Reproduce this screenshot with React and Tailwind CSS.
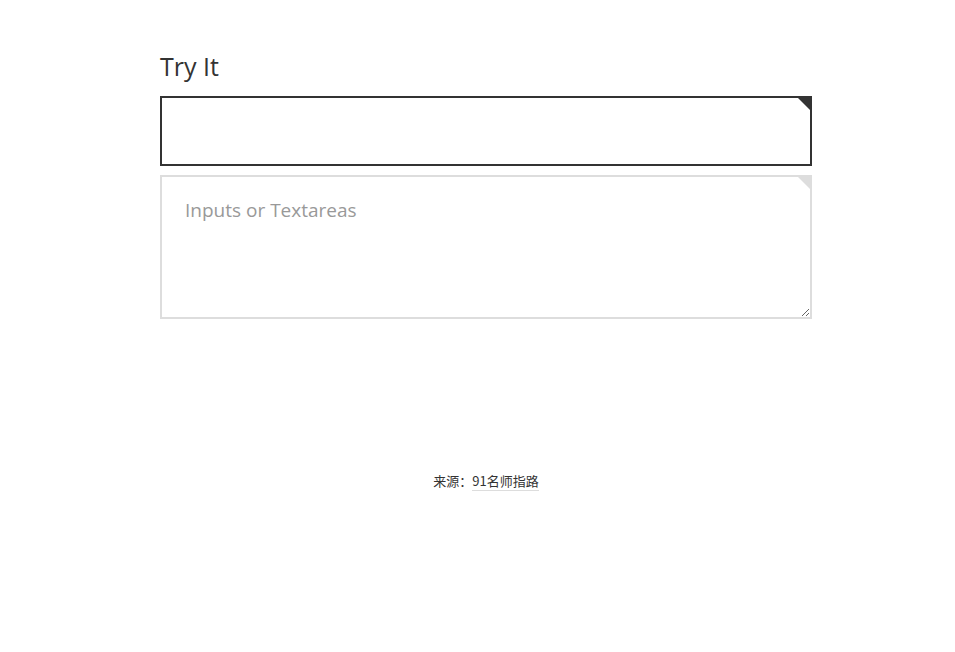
export default function App(){
  return (
    <div className="min-h-[652px] bg-white font-['Open_Sans',sans-serif] text-[#333]">
      <div className="ml-[160px] w-[652px] pt-[49px]">
        <h2 className="text-[25px] leading-[34px] mb-[13px] text-[#333]">Try It</h2>

        <div className="relative">
          <input className="block w-full h-[70px] border-2 border-[#333] bg-white px-[23px] text-[19px] outline-none" />
          <span className="absolute top-0 right-0 w-0 h-0 border-t-[16px] border-l-[16px] border-t-[#333] border-l-transparent" />
        </div>

        <div className="relative mt-[9px]">
          <textarea
            placeholder="Inputs or Textareas"
            className="block w-full h-[144px] border-2 border-[#ddd] bg-white px-[23px] pt-[20px] text-[19px] leading-[27px] text-[#333] placeholder:text-[#999] outline-none"
          />
          <span className="absolute top-0 right-0 w-0 h-0 border-t-[16px] border-l-[16px] border-t-[#ddd] border-l-transparent" />
        </div>

        <p className="mt-[153px] text-center text-[13px] leading-[18px] text-[#333] font-['Noto_Sans_CJK_SC',sans-serif]">
          来源：<a className="border-b border-[#ddd] text-[#333]">91名师指路</a>
        </p>
      </div>
    </div>
  )
}
